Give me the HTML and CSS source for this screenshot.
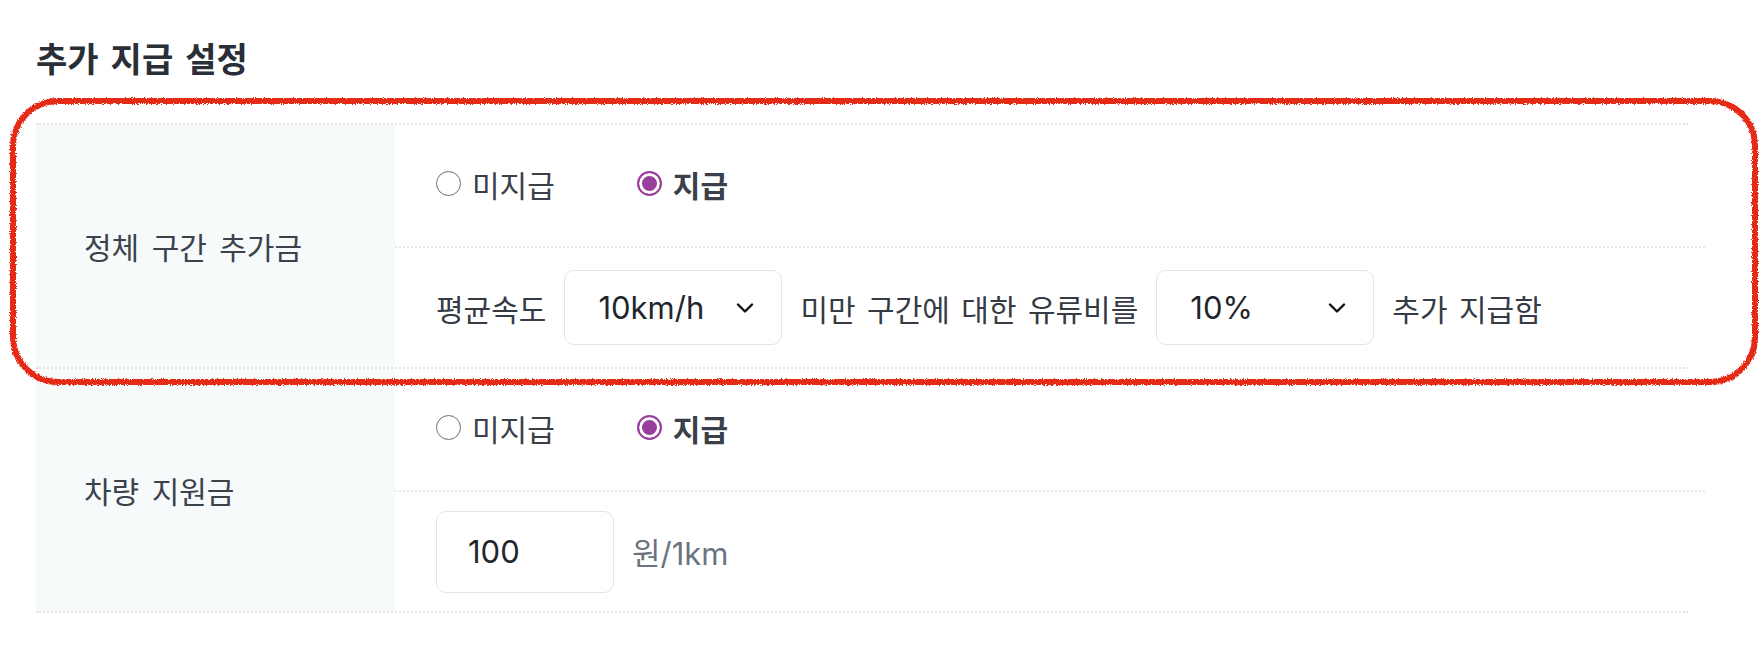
FILE: index.html
```html
<!DOCTYPE html>
<html lang="ko">
<head>
<meta charset="utf-8">
<title>추가 지급 설정</title>
<link rel="stylesheet" href="styles.css">
</head>
<body>
<svg class="defs" width="0" height="0" aria-hidden="true">
  <filter id="rough" x="-5%" y="-5%" width="110%" height="110%">
    <feTurbulence type="fractalNoise" baseFrequency="0.9" numOctaves="2" seed="3" result="noise"/>
    <feDisplacementMap in="SourceGraphic" in2="noise" scale="4" xChannelSelector="R" yChannelSelector="G"/>
  </filter>
</svg>
<main class="page">
  <h2 class="section-title">추가 지급 설정</h2>
  <div class="table">
    <div class="row">
      <div class="label-cell">정체 구간 추가금</div>
      <div class="value-cell">
        <div class="sub-row radio-row">
          <label class="radio"><span class="radio-dot"></span><span>미지급</span></label>
          <label class="radio checked"><span class="radio-dot"></span><span>지급</span></label>
        </div>
        <div class="sub-row">
          <span class="text">평균속도</span>
          <div class="select"><span>10km/h</span>
            <svg class="chev" width="18" height="10" viewBox="0 0 18 10"><path d="M2 1.5 L9 8.5 L16 1.5" fill="none" stroke="#111" stroke-width="2.4" stroke-linecap="round" stroke-linejoin="round"/></svg>
          </div>
          <span class="text">미만 구간에 대한 유류비를</span>
          <div class="select"><span>10%</span>
            <svg class="chev" width="18" height="10" viewBox="0 0 18 10"><path d="M2 1.5 L9 8.5 L16 1.5" fill="none" stroke="#111" stroke-width="2.4" stroke-linecap="round" stroke-linejoin="round"/></svg>
          </div>
          <span class="text">추가 지급함</span>
        </div>
      </div>
    </div>
    <div class="row">
      <div class="label-cell">차량 지원금</div>
      <div class="value-cell">
        <div class="sub-row radio-row">
          <label class="radio"><span class="radio-dot"></span><span>미지급</span></label>
          <label class="radio checked"><span class="radio-dot"></span><span>지급</span></label>
        </div>
        <div class="sub-row">
          <div class="input">100</div>
          <span class="unit">원/1km</span>
        </div>
      </div>
    </div>
  </div>
  <div class="highlight" aria-hidden="true"></div>
</main>
</body>
</html>
```
FILE: styles.css
```css
* { box-sizing: border-box; }
html, body { margin: 0; padding: 0; background: #ffffff; }
body {
  font-family: Inter, "Noto Sans CJK KR", sans-serif;
  font-size: 30px;
  color: #3a4049;
  word-spacing: 3px;
}
.defs { position: absolute; width: 0; height: 0; }
.page {
  position: relative;
  padding: 39px 74px 0 36px;
}
.section-title {
  margin: 0;
  font-size: 34px;
  line-height: 42px;
  font-weight: 700;
  color: #2a2f37;
  word-spacing: 4px;
}
.table {
  margin-top: 42px;
  border-top: 2px dotted #e2e4e6;
}
.row {
  display: grid;
  grid-template-columns: 359px 1fr;
  border-bottom: 2px dotted #e2e4e6;
}
.label-cell {
  background: #f6fafb;
  display: flex;
  align-items: center;
  padding-left: 48px;
  color: #3b424b;
  word-spacing: 4px;
}
.value-cell {
  display: flex;
  flex-direction: column;
}
.sub-row {
  height: 121px;
  display: flex;
  align-items: center;
  padding-left: 41px;
  gap: 18px;
}
.radio-row { padding-bottom: 4px; }
.sub-row + .sub-row { border-top: 2px dotted #e6e8ea; margin-right: -17px; }
.radio {
  display: inline-flex;
  align-items: center;
  gap: 11px;
  margin-right: 64px;
  color: #3a4049;
}
.radio.checked { font-weight: 700; color: #3a4049; }
.radio-dot {
  width: 25px;
  height: 25px;
  border-radius: 50%;
  border: 1.6px solid #6b6f75;
  background: #fff;
}
.radio.checked .radio-dot {
  border: 2.5px solid #9a3f9e;
  box-shadow: inset 0 0 0 3px #fff;
  background: #973f9b;
}
.text { color: #353b44; }
.select {
  width: 218px;
  height: 75px;
  border: 1.5px solid #e2e5e8;
  border-radius: 10px;
  display: flex;
  align-items: center;
  justify-content: space-between;
  padding: 0 27px 0 33px;
  font-size: 31px;
  color: #22262c;
  background: #fff;
}
.chev { display: block; }
.input {
  width: 178px;
  height: 82px;
  border: 1.5px solid #e2e5e8;
  border-radius: 10px;
  display: flex;
  align-items: center;
  padding-left: 31px;
  font-size: 31px;
  color: #22262c;
}
.unit { color: #6c7380; font-size: 31px; }
.highlight {
  position: absolute;
  left: 10px;
  top: 98px;
  width: 1748px;
  height: 287px;
  border: 6px solid #e52a19;
  border-radius: 48px;
  filter: url(#rough);
  pointer-events: none;
}
```
